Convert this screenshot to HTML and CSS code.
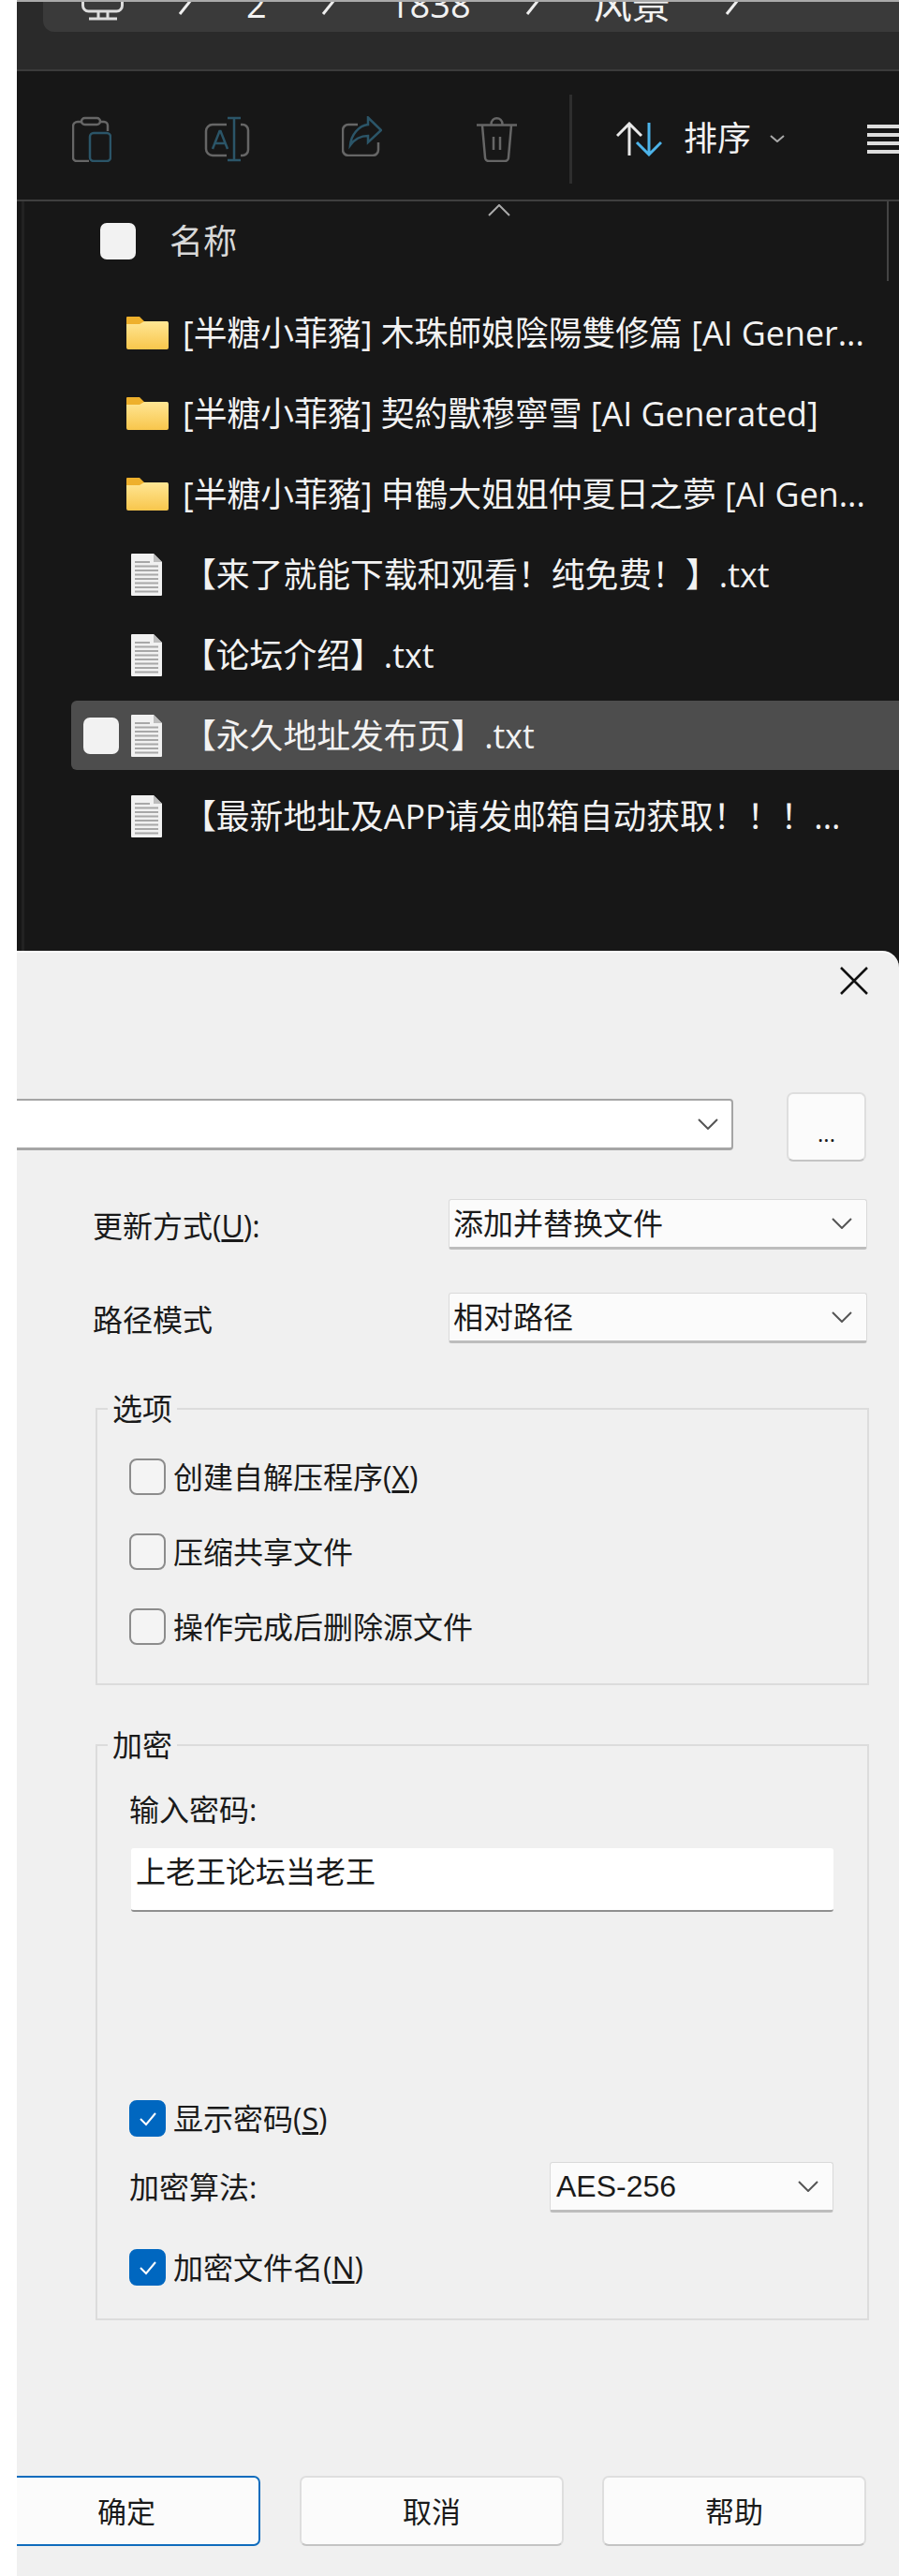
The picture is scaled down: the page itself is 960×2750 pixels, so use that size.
FILE: index.html
```html
<!DOCTYPE html>
<html lang="zh-CN">
<head>
    <meta charset="UTF-8">
    <title>压缩文件</title>
    <link rel="stylesheet" href="styles.css">
</head>
<body>
    <div class="app">
        <section class="explorer">
            <div class="address-wrap">
                <div class="address">
                    <div class="crumbs">
                        <svg class="pc-icon" viewBox="0 0 45 34"><path d="M1.5 0v11a6 6 0 0 0 6 6h30a6 6 0 0 0 6-6V0M18 17v7M28 17v7M8 25h30"/></svg>
                        <svg class="crumb-arrow" viewBox="0 0 15 16"><path d="M14 0 2 15"/></svg>
                        <span>2</span>
                        <svg class="crumb-arrow" viewBox="0 0 15 16"><path d="M14 0 2 15"/></svg>
                        <span>1838</span>
                        <svg class="crumb-arrow" viewBox="0 0 15 16"><path d="M14 0 2 15"/></svg>
                        <span class="crumb-wide">风景</span>
                        <svg class="crumb-arrow" viewBox="0 0 15 16"><path d="M14 0 2 15"/></svg>
                    </div>
                </div>
            </div>

            <div class="toolbar">
                <div class="tools">
                    <div class="tool">
                        <svg class="icon-clip" viewBox="0 0 42 49">
                            <path class="dim" d="M10 6H6a5 5 0 0 0-5 5v33a4 4 0 0 0 4 4h13M30 6h4a4 4 0 0 1 4 4v6"/>
                            <rect class="dim" x="10" y="2" width="20" height="7" rx="3.5"/>
                            <rect class="tint" x="19" y="18" width="22" height="30" rx="4"/>
                        </svg>
                    </div>
                    <div class="tool">
                        <svg class="icon-rename" viewBox="0 0 49 49">
                            <path class="dim" d="M24 9H9a7 7 0 0 0-7 7v19a7 7 0 0 0 7 7h15M39 9h2a6 6 0 0 1 6 6v21a6 6 0 0 1-6 6h-2"/>
                            <path class="tint" d="M32 2v45M25 2h14M25 47h14M9 35l7.500-19h1L25 35M12 29h10"/>
                        </svg>
                    </div>
                    <div class="tool">
                        <svg class="icon-share" viewBox="0 0 43 43">
                            <path class="dim" d="M17 9H7a6 6 0 0 0-6 6v21a6 6 0 0 0 6 6h26a6 6 0 0 0 6-6v-8"/>
                            <path class="tint" d="M28 1.500 42 15 28 28v-7C20 21 14 24 9 31c1-11 9-21 19-22z"/>
                        </svg>
                    </div>
                    <div class="tool">
                        <svg class="icon-trash" viewBox="0 0 43 49">
                            <path class="dim" d="M0 9.500h43M15.500 9c0-9 12-9 12 0M6 10l3 34a4 4 0 0 0 4 4h17a4 4 0 0 0 4-4l3-34M18 22v14M25 22v14"/>
                        </svg>
                    </div>
                </div>
                <div class="tool-sep"></div>
                <svg class="icon-sort" viewBox="0 0 49 37">
                    <path class="up" d="M14 36V2M1 15 14 2l13 13"/>
                    <path class="down" d="M35 1v34M22 22l13 13 13-13"/>
                </svg>
                <span class="sort-label">排序</span>
                <svg class="icon-drop" viewBox="0 0 16 8"><path d="m1 1 7 6 7-6"/></svg>
                <div class="menu-lines"><i></i><i></i><i></i><i></i></div>
            </div>

            <div class="list">
                <div class="list-head">
                    <div class="name-col">
                        <svg class="sort-caret" viewBox="0 0 24 13"><path d="m1 12 11-11 11 11"/></svg>
                        <span class="check-dark"></span>
                        <span class="name-label">名称</span>
                    </div>
                </div>

                <div class="row">
                    <span class="check-slot"></span>
                    <span class="icon-slot"><svg class="folder"><use href="#folder"/></svg></span>
                    <span class="file-name">[半糖小菲豬] 木珠師娘陰陽雙修篇 [AI Gener...</span>
                </div>
                <div class="row">
                    <span class="check-slot"></span>
                    <span class="icon-slot"><svg class="folder"><use href="#folder"/></svg></span>
                    <span class="file-name">[半糖小菲豬] 契約獸穆寧雪 [AI Generated]</span>
                </div>
                <div class="row">
                    <span class="check-slot"></span>
                    <span class="icon-slot"><svg class="folder"><use href="#folder"/></svg></span>
                    <span class="file-name">[半糖小菲豬] 申鶴大姐姐仲夏日之夢 [AI Gen...</span>
                </div>
                <div class="row">
                    <span class="check-slot"></span>
                    <span class="icon-slot"><svg class="doc"><use href="#doc"/></svg></span>
                    <span class="file-name">【来了就能下载和观看！纯免费！】.txt</span>
                </div>
                <div class="row">
                    <span class="check-slot"></span>
                    <span class="icon-slot"><svg class="doc"><use href="#doc"/></svg></span>
                    <span class="file-name">【论坛介绍】.txt</span>
                </div>
                <div class="row selected">
                    <span class="check-slot"><span class="check-dark"></span></span>
                    <span class="icon-slot"><svg class="doc"><use href="#doc"/></svg></span>
                    <span class="file-name">【永久地址发布页】.txt</span>
                </div>
                <div class="row">
                    <span class="check-slot"></span>
                    <span class="icon-slot"><svg class="doc"><use href="#doc"/></svg></span>
                    <span class="file-name">【最新地址及APP请发邮箱自动获取！！！...</span>
                </div>
            </div>
        </section>

        <section class="dialog">
            <div class="close-row">
                <svg class="icon-close" viewBox="0 0 32 30"><path d="m2 1 28 28M30 1 2 29"/></svg>
            </div>

            <div class="path-row">
                <div class="path-combo">
                    <svg class="chevron-lg" viewBox="0 0 22 12"><path d="m1 1 10 10L21 1"/></svg>
                </div>
                <div class="browse-btn">...</div>
            </div>

            <div class="field-row update-row">
                <span>更新方式(<u>U</u>):</span>
                <div class="select">添加并替换文件<svg class="chevron" viewBox="0 0 22 12"><path d="m1 1 10 10L21 1"/></svg></div>
            </div>
            <div class="field-row mode-row">
                <span>路径模式</span>
                <div class="select">相对路径<svg class="chevron" viewBox="0 0 22 12"><path d="m1 1 10 10L21 1"/></svg></div>
            </div>

            <div class="group options">
                <div class="group-title">选项</div>
                <div class="check-list">
                    <div class="check-line"><span class="check"></span>创建自解压程序(<u>X</u>)</div>
                    <div class="check-line"><span class="check"></span>压缩共享文件</div>
                    <div class="check-line"><span class="check"></span>操作完成后删除源文件</div>
                </div>
            </div>

            <div class="group encrypt">
                <div class="group-title">加密</div>
                <div class="pw-label">输入密码:</div>
                <div class="pw-input">上老王论坛当老王</div>
                <div class="check-line show-pw">
                    <span class="check on"><svg viewBox="0 0 20 16"><path d="m2 8 6 6L18 2"/></svg></span>显示密码(<u>S</u>)
                </div>
                <div class="algo-row">
                    <span>加密算法:</span>
                    <div class="select algo">AES-256<svg class="chevron" viewBox="0 0 22 12"><path d="m1 1 10 10L21 1"/></svg></div>
                </div>
                <div class="check-line enc-names">
                    <span class="check on"><svg viewBox="0 0 20 16"><path d="m2 8 6 6L18 2"/></svg></span>加密文件名(<u>N</u>)
                </div>
            </div>

            <div class="buttons">
                <div class="btn btn-ok">确定</div>
                <div class="btn btn-cancel">取消</div>
                <div class="btn btn-help">帮助</div>
            </div>
        </section>
    </div>

    <!-- shared file icons -->
    <svg class="defs">
        <defs>
            <linearGradient id="folderFill" x1="0" y1="0" x2="0" y2="1">
                <stop offset="0" stop-color="#ffe694"/>
                <stop offset="1" stop-color="#f8c64c"/>
            </linearGradient>
            <symbol id="folder" viewBox="0 0 45 35">
                <path fill="#eeb02c" d="M1 0h13l5 5h25v8H0V1a1 1 0 0 1 1-1z"/>
                <path fill="url(#folderFill)" d="M0 8h14l5-3h24a2 2 0 0 1 2 2v26a2 2 0 0 1-2 2H2a2 2 0 0 1-2-2z"/>
            </symbol>
            <symbol id="doc" viewBox="0 0 33 45">
                <path fill="#f1f1f1" d="M1 0h23l9 9v35a1 1 0 0 1-1 1H1a1 1 0 0 1-1-1V1a1 1 0 0 1 1-1z"/>
                <path fill="#bdbdbd" d="M24 0l9 9h-9z"/>
                <path stroke="#a8a8a8" stroke-width="2" d="M4 9h16M4 13.500h25M4 18h25M4 22.500h25M4 27h25M4 31.500h25M4 36h25M4 40.500h25"/>
            </symbol>
        </defs>
    </svg>
</body>
</html>
```

FILE: styles.css
```css
* {
    box-sizing: border-box;
}

body {
    margin: 0;
    background: #fff;
    font-family: "Open Sans", "Noto Sans CJK SC", sans-serif;
}

/* holds the symbols; display: none would drop the gradient */
.defs {
    position: absolute;
    width: 0;
    height: 0;
}

svg {
    display: block;
    flex: none;
    fill: none;
}

.app {
    width: 942px;
    height: 2750px;
    margin-left: 18px;
    background: #171717;
    overflow: hidden;
}

/* explorer window */
.explorer {
    height: 1015px;
    color: #f2f2f2;
}

.address-wrap {
    height: 76px;
    padding-left: 28px;
    background: #2a2a2a;
    border-top: 2px solid #aaa;
    border-bottom: 2px solid #3b3b3b;
    overflow: hidden;
}

.address {
    height: 48px;
    background: #3a3a3a;
    border-bottom-left-radius: 12px;
    padding-left: 41px;
}

.crumbs {
    display: flex;
    align-items: center;
    gap: 58px;
    height: 36px;
    margin-top: -16px;
    font-size: 38px;
    line-height: 36px;
}

.crumb-wide {
    font-size: 41px;
}

.pc-icon {
    width: 45px;
    height: 34px;
    margin-top: 16px;
    stroke: #ddd;
    stroke-width: 3;
}

.crumb-arrow {
    width: 15px;
    height: 16px;
    margin-top: 8px;
    stroke: #eee;
    stroke-width: 3;
}

.toolbar {
    display: flex;
    align-items: center;
    height: 139px;
    padding: 7px 0 0 8px;
    border-bottom: 2px solid #3f3f3f;
    overflow: hidden;
}

.tools {
    display: flex;
    flex: none;
}

.tool {
    display: flex;
    justify-content: center;
    width: 144px;
}

.dim {
    stroke: #666;
    stroke-width: 2.5;
}

.tint {
    stroke: #2b5568;
    stroke-width: 2.5;
}

.icon-clip,
.icon-rename,
.icon-trash {
    height: 49px;
}

.icon-clip {
    width: 42px;
}

.icon-rename {
    width: 49px;
}

.icon-share {
    width: 43px;
    height: 43px;
}

.icon-trash {
    width: 43px;
}

.tool-sep {
    flex: none;
    width: 3px;
    height: 95px;
    margin-left: 6px;
    background: #2e2e2e;
}

.icon-sort {
    width: 49px;
    height: 37px;
    margin-left: 47px;
    stroke-width: 3;
}

.up {
    stroke: #e8e8e8;
}

.down {
    stroke: #4db4ea;
}

.sort-label {
    flex: none;
    margin-left: 23px;
    font-size: 36px;
    line-height: 44px;
}

.icon-drop {
    width: 16px;
    height: 8px;
    margin-left: 20px;
    stroke: #aaa;
    stroke-width: 2;
}

.menu-lines {
    display: flex;
    flex: none;
    flex-direction: column;
    gap: 5px;
    width: 40px;
    margin-left: 88px;
}

.menu-lines i {
    display: block;
    height: 4px;
    background: #ddd;
}

.list {
    height: 800px;
    margin-left: 5px;
    border-left: 3px solid #222;
}

.list-head {
    height: 103px;
}

.name-col {
    position: relative;
    display: flex;
    align-items: flex-start;
    width: 923px;
    height: 85px;
    padding: 23px 0 0 81px;
    border-right: 2px solid #444;
}

.sort-caret {
    position: absolute;
    left: 495px;
    top: 3px;
    width: 24px;
    height: 13px;
    stroke: #aaa;
    stroke-width: 2;
}

.check-dark {
    display: block;
    width: 38px;
    height: 39px;
    background: #f2f2f2;
    border-radius: 7px;
}

.name-label {
    margin-left: 36px;
    font-size: 36px;
    line-height: 40px;
    color: #d8d8d8;
}

.row {
    display: flex;
    align-items: center;
    height: 74px;
    margin: 0 0 12px 50px;
    padding-left: 13px;
    border-radius: 6px 0 0 6px;
}

.row.selected {
    background: #4d4d4d;
}

.check-slot {
    width: 37px;
}

.icon-slot {
    display: flex;
    align-items: center;
    width: 69px;
}

.folder {
    width: 45px;
    height: 35px;
    margin-left: 9px;
}

.doc {
    width: 33px;
    height: 45px;
    margin-left: 14px;
}

.file-name {
    font-size: 35.8px;
    line-height: 44px;
    white-space: nowrap;
}

/* compress dialog */
.dialog {
    height: 1735px;
    padding: 0 32px 0 83px;
    background: #f0f0f0;
    border-top: 2px solid #fafafa;
    border-top-right-radius: 18px;
    color: #1a1a1a;
    font-size: 32px;
    line-height: 40px;
}

.close-row {
    display: flex;
    justify-content: flex-end;
    height: 30px;
    margin-top: 15px;
}

.icon-close {
    width: 32px;
    height: 30px;
    stroke: #111;
    stroke-width: 2.5;
}

.path-row {
    display: flex;
    height: 74px;
    margin: 104px 0 0 -83px;
}

.path-combo {
    display: flex;
    align-items: center;
    justify-content: flex-end;
    width: 765px;
    height: 55px;
    margin-top: 7px;
    padding-right: 14px;
    background: #fff;
    border: 1px solid #a5a5a5;
    border-width: 2px 2px 3px 0;
    border-radius: 0 4px 4px 0;
}

.chevron-lg,
.chevron {
    width: 22px;
    height: 12px;
    stroke: #555;
    stroke-width: 2;
}

.browse-btn {
    width: 85px;
    height: 74px;
    margin-left: 57px;
    padding-top: 22px;
    text-align: center;
    font-size: 24px;
    background: #fbfbfb;
    border: 2px solid #dedede;
    border-bottom-color: #c4c4c4;
    border-radius: 7px;
}

.field-row {
    display: grid;
    grid-template-columns: 380px 447px;
    align-items: center;
    margin-left: -2px;
}

.update-row {
    margin-top: 40px;
}

.mode-row {
    margin-top: 46px;
}

.field-row span {
    padding-top: 4px;
}

.select {
    display: flex;
    align-items: center;
    justify-content: space-between;
    height: 54px;
    padding: 0 15px 0 4px;
    background: #fbfbfb;
    border: 1px solid #dadada;
    border-bottom: 3px solid #bdbdbd;
    border-radius: 3px;
}

.group {
    border: 2px solid #dcdcdc;
    margin-left: 1px;
    padding: 0 36px 0 34px;
}

.group-title {
    width: fit-content;
    margin: -17px 0 0 -23px;
    padding: 0 5px;
    background: #f0f0f0;
    line-height: 32px;
}

.options {
    height: 296px;
    margin-top: 69px;
}

.check-list {
    display: flex;
    flex-direction: column;
    gap: 41px;
    margin-top: 37px;
}

.check-line {
    display: flex;
    align-items: center;
    height: 39px;
}

.check {
    display: flex;
    align-items: center;
    justify-content: center;
    width: 39px;
    height: 39px;
    margin-right: 8px;
    border: 2px solid #8c8c8c;
    border-radius: 8px;
    background: #f4f4f4;
}

.check.on {
    background: #0067c0;
    border-color: #0067c0;
}

.check svg {
    width: 20px;
    height: 16px;
    stroke: #fff;
    stroke-width: 2;
}

.encrypt {
    height: 615px;
    margin-top: 63px;
}

.pw-label {
    margin-top: 37px;
    line-height: 32px;
}

.pw-input {
    height: 68px;
    margin: 25px 0 0 2px;
    padding: 9px 5px 0;
    background: #fff;
    border-bottom: 2px solid #8f8f8f;
    border-radius: 3px;
    line-height: 32px;
}

.show-pw {
    margin-top: 201px;
}

.algo-row {
    display: flex;
    align-items: center;
    justify-content: space-between;
    margin-top: 27px;
}

.algo {
    width: 303px;
    padding-left: 6px;
    font-family: "Liberation Sans", sans-serif;
}

.enc-names {
    margin-top: 39px;
}

.buttons {
    display: flex;
    margin: 166px 0 0 -83px;
}

.btn {
    display: flex;
    align-items: center;
    justify-content: center;
    width: 282px;
    height: 75px;
    background: #fbfbfb;
    border: 2px solid #dedede;
    border-bottom-color: #c4c4c4;
    border-radius: 7px;
    font-size: 31px;
}

.btn-ok {
    width: 260px;
    padding-right: 24px;
    border: 2px solid #0f6cbd;
    border-left: none;
    border-radius: 0 7px 7px 0;
}

.btn-cancel {
    margin-left: 42px;
}

.btn-help {
    margin-left: 41px;
}
```
